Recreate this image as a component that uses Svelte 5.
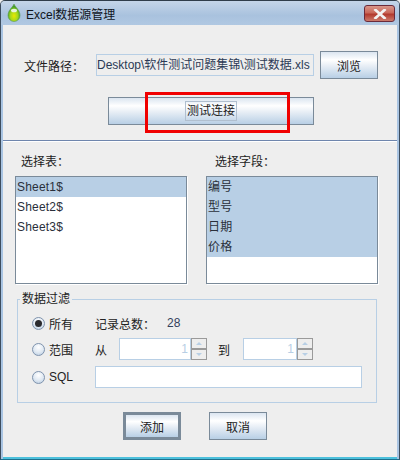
<script>
  const tables = ['Sheet1$', 'Sheet2$', 'Sheet3$'];
  const fields = ['编号', '型号', '日期', '价格'];
</script>

<div class="window">
  <header class="titlebar">
    <svg class="logo" width="14" height="20" viewBox="0 0 14 20">
      <defs>
        <radialGradient id="drop" cx="50%" cy="68%" r="55%">
          <stop offset="0" stop-color="#e8e800" />
          <stop offset="0.55" stop-color="#a6d81c" />
          <stop offset="1" stop-color="#3f9a2a" />
        </radialGradient>
      </defs>
      <path d="M7 1 C8 4 13 7 13 12.5 A6 6 0 0 1 1 12.5 C1 7 6 4 7 1Z" fill="url(#drop)" stroke="#5d9a52" stroke-width="0.6" />
      <ellipse cx="7" cy="7.5" rx="3" ry="1.8" fill="#e6f5dc" />
    </svg>
    <span class="title">Excel数据源管理</span>
    <button class="close" aria-label="关闭">
      <svg width="14" height="10" viewBox="0 0 14 10">
        <path d="M2.5 1 L11.5 9 M11.5 1 L2.5 9" stroke="#f2f2f2" stroke-width="2.8" stroke-linecap="square" />
      </svg>
    </button>
  </header>

  <main class="content">
    <div class="file-row">
      <span class="file-label">文件路径：</span>
      <div class="path">Desktop\软件测试问题集锦\测试数据.xls</div>
      <button class="btn browse">浏览</button>
    </div>

    <div class="connect-row">
      <button class="btn connect"><span class="focus">测试连接</span></button>
      <div class="marker"></div>
    </div>

    <div class="divider"></div>

    <div class="lists">
      <section class="col table-col">
        <div class="col-label">选择表：</div>
        <ul class="list">
          {#each tables as t, i}
            <li class:selected={i === 0}>{t}</li>
          {/each}
        </ul>
      </section>
      <section class="col field-col">
        <div class="col-label">选择字段：</div>
        <ul class="list">
          {#each fields as f}
            <li class="selected">{f}</li>
          {/each}
        </ul>
      </section>
    </div>

    <fieldset class="filter">
      <legend>数据过滤</legend>
      <div class="row row-all">
        <span class="radio checked"></span><span class="radio-label">所有</span>
        <span class="count-label">记录总数：</span><span class="count">28</span>
      </div>
      <div class="row row-range">
        <span class="radio"></span><span class="radio-label">范围</span>
        <span class="from">从</span>
        <div class="spinner wide">
          <div class="spin-input">1</div>
          <div class="arrows"><i class="up"></i><i class="down"></i></div>
        </div>
        <span class="to">到</span>
        <div class="spinner narrow">
          <div class="spin-input">1</div>
          <div class="arrows"><i class="up"></i><i class="down"></i></div>
        </div>
      </div>
      <div class="row row-sql">
        <span class="radio"></span><span class="radio-label">SQL</span>
        <div class="sql-input"></div>
      </div>
    </fieldset>

    <div class="actions">
      <button class="btn add">添加</button>
      <button class="btn">取消</button>
    </div>
  </main>
</div>

<style>
  :global(body) {
    margin: 0;
    background: #eeeeee;
  }
  .window {
    box-sizing: border-box;
    width: 400px;
    height: 460px;
    display: flex;
    flex-direction: column;
    border: 1px solid #3d4d5e;
    border-top-color: #2f3d4a;
    border-radius: 5px 5px 0 0;
    border-bottom-color: #1f6f8c;
    box-shadow: inset 2px 0 0 #a9c4e2, inset -2px 0 0 #a9c4e2, inset 0 -2px 0 #4cc0dc;
    background: #eeeeee;
    font-family: "Liberation Sans", "Noto Sans CJK SC", sans-serif;
    font-size: 12px;
    color: #222;
    overflow: hidden;
  }
  .titlebar {
    height: 24px;
    flex: none;
    display: flex;
    align-items: center;
    padding-left: 6px;
    background: linear-gradient(#c4d5e8, #a9c2de 60%, #b0c8e2);
    position: relative;
  }
  .logo {
    margin: 0 5px 0 0;
  }
  .title {
    font-size: 12px;
    color: #10151c;
  }
  .close {
    position: absolute;
    right: 4px;
    top: 4px;
    width: 31px;
    height: 17px;
    padding: 0;
    border: 1px solid #6b2a3a;
    border-radius: 3px;
    background: linear-gradient(#d9968a, #c9685a 45%, #b23a2e 55%, #cc7a6c);
    display: flex;
    align-items: center;
    justify-content: center;
  }
  .content {
    flex: 1;
    margin: 0 2px 2px;
    background: #eeeeee;
    display: flex;
    flex-direction: column;
    min-height: 0;
  }
  .file-row {
    display: flex;
    align-items: center;
    margin-top: 26px;
    padding-left: 21px;
    height: 28px;
  }
  .file-label {
    width: 72px;
  }
  .path {
    box-sizing: border-box;
    width: 218px;
    height: 22px;
    line-height: 20px;
    border: 1px solid #b8cfe5;
    padding-left: 0;
    color: #2b3a55;
    white-space: nowrap;
    overflow: hidden;
    background: #eeeeee;
  }
  .btn {
    box-sizing: border-box;
    width: 58px;
    height: 28px;
    padding: 0;
    border: 1px solid #7a8a99;
    background: linear-gradient(#dbe5f0, #ffffff 30%, #e6edf5 55%, #b8cfe5);
    font: inherit;
    color: #222;
  }
  .browse {
    margin-left: 6px;
  }
  .connect-row {
    position: relative;
    margin-top: 18px;
    margin-left: 105px;
    height: 28px;
  }
  .connect {
    width: 206px;
    display: block;
  }
  .focus {
    display: inline-block;
    padding: 0 1px;
    line-height: 18px;
    border: 1px solid #b0bfcf;
  }
  .marker {
    position: absolute;
    left: 37px;
    top: -5px;
    width: 145px;
    height: 41px;
    box-sizing: border-box;
    border: 3px solid #f00000;
    pointer-events: none;
  }
  .divider {
    margin-top: 15px;
    height: 2px;
    background: linear-gradient(#6f86ad 50%, #ffffff 50%);
    flex: none;
  }
  .lists {
    display: flex;
    margin-top: 11px;
    margin-left: 12px;
  }
  .col {
    width: 172px;
  }
  .field-col {
    margin-left: 19px;
  }
  .col-label {
    height: 23px;
    line-height: 18px;
    padding-left: 6px;
  }
  .field-col .col-label {
    padding-left: 9px;
  }
  .list {
    box-sizing: border-box;
    list-style: none;
    margin: 0;
    padding: 0;
    height: 108px;
    border: 1px solid #7a8a99;
    box-shadow: 1px 1px 0 #ffffff;
    background: #ffffff;
    color: #2a2f3a;
  }
  .list li {
    height: 20px;
    line-height: 20px;
    padding-left: 1px;
    letter-spacing: 0.2px;
  }
  .list li.selected {
    background: #b8cfe5;
  }
  .filter {
    box-sizing: border-box;
    margin: 7px 0 0 14px;
    padding: 0;
    width: 360px;
    height: 112px;
    border: 1px solid #b8cfe5;
    min-width: 0;
  }
  legend {
    margin-left: 2px;
    padding: 0 2px;
    line-height: 16px;
  }
  .row {
    position: relative;
    display: flex;
    align-items: center;
    height: 22px;
    padding-left: 14px;
  }
  .row-all {
    margin-top: 5px;
  }
  .row-range {
    margin-top: 4px;
  }
  .row-sql {
    margin-top: 6px;
  }
  .radio {
    box-sizing: border-box;
    width: 13px;
    height: 13px;
    border-radius: 50%;
    border: 1px solid #7f93ad;
    background: radial-gradient(circle at 50% 30%, #ffffff, #dfe8f2 55%, #b4c9df);
    display: flex;
    align-items: center;
    justify-content: center;
    flex: none;
  }
  .radio.checked::after {
    content: "";
    width: 7px;
    height: 7px;
    border-radius: 50%;
    background: #2a2a2e;
  }
  .radio-label {
    margin-left: 4px;
    width: 46px;
    flex: none;
    font-size: 12px;
  }
  .count-label {
    width: 72px;
    flex: none;
  }
  .count {
    color: #33415c;
  }
  .from {
    width: 24px;
    flex: none;
  }
  .to {
    width: 25px;
    margin-left: 11px;
    flex: none;
  }
  .spinner {
    display: flex;
    height: 22px;
  }
  .spin-input {
    box-sizing: border-box;
    height: 22px;
    border: 1px solid #b8cfe5;
    background: #ffffff;
    color: #b8cfe5;
    text-align: right;
    padding-right: 2px;
    line-height: 20px;
  }
  .wide .spin-input {
    width: 72px;
  }
  .narrow .spin-input {
    width: 54px;
  }
  .arrows {
    box-sizing: border-box;
    width: 16px;
    height: 22px;
    border: 1px solid #9a9a9a;
    display: flex;
    flex-direction: column;
    background: #eeeeee;
  }
  .arrows i {
    flex: 1;
    display: flex;
    align-items: center;
    justify-content: center;
  }
  .arrows i.up {
    border-bottom: 1px solid #9a9a9a;
  }
  .arrows i.down {
    border-top: 1px solid #9a9a9a;
  }
  .arrows i::after {
    content: "";
    border-left: 3px solid transparent;
    border-right: 3px solid transparent;
  }
  .arrows i.up::after {
    border-bottom: 3px solid #b8cfe5;
  }
  .arrows i.down::after {
    border-top: 3px solid #b8cfe5;
  }
  .sql-input {
    box-sizing: border-box;
    width: 267px;
    height: 22px;
    border: 1px solid #b8cfe5;
    background: #ffffff;
  }
  .actions {
    display: flex;
    margin-top: 9px;
    margin-left: 120px;
    gap: 28px;
  }
  .add {
    border: 3px solid #7a8a99;
  }
</style>
